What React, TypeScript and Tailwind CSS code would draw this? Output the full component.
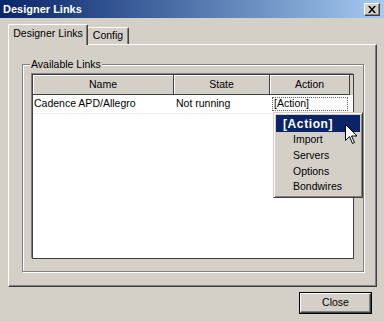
import React from 'react';

const FONT = { fontFamily: '"Liberation Sans", Arial, sans-serif' };

const cols = [
  { label: 'Name', w: 'w-[141px]' },
  { label: 'State', w: 'w-[96px]' },
  { label: 'Action', w: 'w-[80px]' },
];

const menu = ['Import', 'Servers', 'Options', 'Bondwires'];

function CloseGlyph() {
  return (
    <svg width="8" height="7" viewBox="0 0 8 7">
      <path d="M0 0h2l2 2.5L6 0h2L5 3.5 8 7H6L4 4.5 2 7H0l3-3.5z" fill="#000" />
    </svg>
  );
}

function Cursor() {
  return (
    <svg width="12" height="20" viewBox="0 0 12 20" className="absolute left-[345px] top-[124px]">
      <path d="M0.5 0.5v16l4-4 3 7 2-1-3-6.5h5.5z" fill="#fff" stroke="#000" strokeWidth="1" />
    </svg>
  );
}

export default function App() {
  return (
    <div style={FONT} className="relative w-[384px] h-[321px] overflow-hidden bg-[#d4d0c8] text-[10.5px] text-black">
      {/* barra de título */}
      <div className="h-[18px] flex items-center justify-between pl-[3px] pr-[4px] bg-gradient-to-r from-[#0a246a] to-[#a6caf0]">
        <span className="text-white font-bold text-[11px]">Designer Links</span>
        <button className="w-[16px] h-[13px] mt-[1px] flex items-center justify-center bg-[#d4d0c8] border border-t-white border-l-white border-r-[#404040] border-b-[#404040] shadow-[inset_-1px_-1px_0_#808080]">
          <CloseGlyph />
        </button>
      </div>

      {/* pestañas */}
      <div className="flex items-end pl-[8px] mt-[6px] relative z-10">
        <div className="h-[21px] w-[80px] -mb-px flex items-center justify-center pb-[2px] bg-[#d4d0c8] border-l border-t border-l-white border-t-white border-r border-r-[#404040] rounded-tl-[2px] rounded-tr-[2px] shadow-[inset_-1px_0_0_#808080]">
          Designer Links
        </div>
        <div className="h-[17px] w-[41px] flex items-center justify-center bg-[#d4d0c8] border-t border-t-white border-r border-r-[#404040] rounded-tr-[2px] shadow-[inset_-1px_0_0_#808080]">
          Config
        </div>
      </div>

      {/* panel */}
      <div className="ml-[8px] w-[369px] h-[243px] border border-t-white border-l-white border-r-[#404040] border-b-[#404040] shadow-[inset_-1px_-1px_0_#808080]">
        {/* grupo */}
        <div className="relative ml-[13px] mt-[19px] w-[342px] h-[208px] border border-[#808080] shadow-[1px_1px_0_#fff,inset_1px_1px_0_#fff]">
          <span className="absolute left-[7px] top-[-8px] px-[1px] bg-[#d4d0c8] leading-[14px]">Available Links</span>

          {/* lista */}
          <div className="ml-[9px] mt-[9px] w-[322px] h-[185px] bg-white border border-[#404040] shadow-[-1px_-1px_0_#808080]">
            <div className="flex h-[20px] bg-[#d4d0c8]">
              {cols.map((c) => (
                <div
                  key={c.label}
                  className={`${c.w} h-full flex items-center justify-center border-r border-b border-[#404040] shadow-[inset_1px_1px_0_#fff]`}
                >
                  {c.label}
                </div>
              ))}
            </div>
            <div className="flex h-[19px] items-center border-b border-[#ececec]">
              <div className="w-[141px] pl-[1px]">Cadence APD/Allegro</div>
              <div className="w-[96px] pl-[2px]">Not running</div>
              <div className="w-[80px] h-full py-[2px] px-[2px]">
                <div className="h-full border border-dotted border-[#606060] flex items-center pl-[1px]">[Action]</div>
              </div>
            </div>
          </div>
        </div>
      </div>

      {/* botón cerrar */}
      <div className="flex justify-end pr-[12px] mt-[5px]">
        <button className="w-[73px] h-[22px] border border-black flex">
          <span className="flex-1 flex items-center justify-center border border-t-white border-l-white border-r-[#404040] border-b-[#404040] shadow-[inset_-1px_-1px_0_#808080]">
            Close
          </span>
        </button>
      </div>

      {/* menú desplegable */}
      <div className="absolute left-[273px] top-[112px] w-[90px] h-[86px] bg-[#d4d0c8] border border-t-[#d4d0c8] border-l-[#d4d0c8] border-r-[#404040] border-b-[#404040] shadow-[inset_1px_1px_0_#fff,inset_-1px_-1px_0_#808080] p-[2px] flex flex-col">
        <div className="h-[17px] flex items-center pl-[7px] bg-[#0a246a] text-white font-bold text-[12px] tracking-[0.6px]">[Action]</div>
        {menu.map((m) => (
          <div key={m} className="h-[16.5px] flex items-center pl-[17px]">
            {m}
          </div>
        ))}
      </div>

      <Cursor />
    </div>
  );
}
